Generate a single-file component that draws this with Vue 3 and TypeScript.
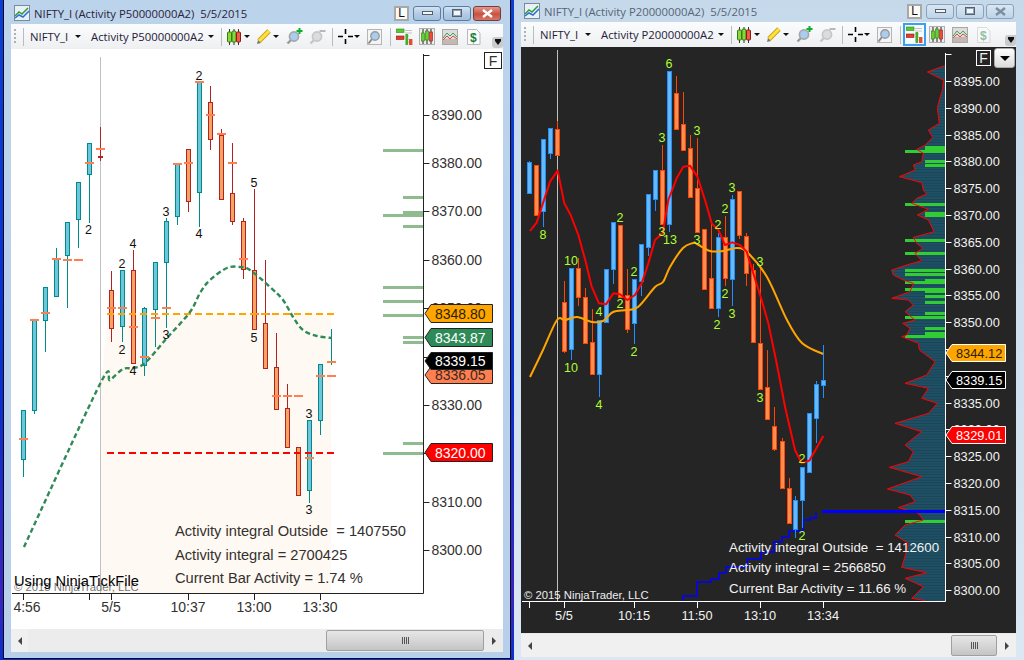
<script setup lang="ts">
type Point = [number, number]
// x, body top, body bottom, wick top, wick bottom, tick y
type Row = [number, number, number, number?, number?, number?]

interface ChartWindow {
  id: string
  title: string
  symbol: string
  account: string
  box: [number, number, number, number]
  candles: { up: Row[]; down: Row[] }
  marks: [string, number, number][]
  curves: { cls: string; points: Point[]; smooth?: boolean }[]
  axis: { x: number; top: number; bottom: number; left: number }
  prices: { text: string; y: number; tickOnly?: boolean }[]
  times: { text: string; x: number }[]
  extraTicks: number[]
  flags: { text: string; y: number; h: number; cls: string }[]
  flagX: [number, number, number, number]
  notes: { text: string; y: number }[]
  noteX: number
  copyrightY: number
  separatorX: number
  tickLen: number
}

const zoomPts = (ox: number, oy: number, pts: number[][]): Point[] =>
  pts.map(([x, y]) => [ox + x / 3, oy + y / 3] as Point)

const pointsAttr = (pts: Point[]) => pts.map(p => p.join(',')).join(' ')

// catmull-rom through the points, so the averages don't look like polylines
const curvePath = (pts: Point[], smooth?: boolean) => {
  let d = `M${pts[0][0]} ${pts[0][1]}`
  for (let i = 1; i < pts.length; i++) {
    const [x, y] = pts[i]
    if (!smooth) {
      d += ` L${x} ${y}`
      continue
    }
    const p0 = pts[Math.max(i - 2, 0)]
    const p1 = pts[i - 1]
    const p3 = pts[Math.min(i + 1, pts.length - 1)]
    const c1x = (p1[0] + (x - p0[0]) / 6).toFixed(1)
    const c1y = (p1[1] + (y - p0[1]) / 6).toFixed(1)
    const c2x = (x - (p3[0] - p1[0]) / 6).toFixed(1)
    const c2y = (y - (p3[1] - p1[1]) / 6).toFixed(1)
    d += ` C${c1x} ${c1y} ${c2x} ${c2y} ${x} ${y}`
  }
  return d
}

const flagPath = (w: ChartWindow, y: number, h: number) => {
  const [tip, notch, right] = w.flagX
  return `M${tip} ${y + h / 2} L${notch} ${y} H${right} V${y + h} H${notch} Z`
}

// labels that sit fully behind a price flag keep only their tick
const priceRange = (from: number, to: number, step: number, y0: number, scale: number, hidden: number[]) => {
  const out: { text: string; y: number; tickOnly?: boolean }[] = []
  for (let p = from; p >= to; p -= step) {
    out.push({ text: `${p}.00`, y: y0 + (from - p) * scale, tickOnly: hidden.includes(p) })
  }
  return out
}

const leftWindow: ChartWindow = {
  id: 'light',
  title: 'NIFTY_I (Activity P50000000A2)  5/5/2015',
  symbol: 'NIFTY_I',
  account: 'Activity P50000000A2',
  box: [11, 49, 492, 580],
  candles: {
    up: [
      [23.5, 410, 459, 410, 477, 439],
      [34.5, 320, 410, 320, 414, 320],
      [45.5, 287, 320, 287, 352, 313],
      [56.5, 259, 296, 248, 296, 259],
      [67.5, 222, 255, 222, 308, 260],
      [78.5, 182, 219, 182, 248, 260],
      [89.5, 143, 174, 143, 223, 163],
      [122.5, 270, 326, 270, 342, 308],
      [144.5, 308, 365, 307, 376, 357],
      [155.5, 262, 309, 262, 347, 318],
      [166.5, 221, 262, 218, 328, 308],
      [177.5, 164, 216, 164, 225, 164],
      [199.5, 82, 192, 82, 227, 82],
      [309.5, 420, 490, 420, 503, 458],
      [320.5, 364, 420, 364, 435, 376],
      [331.5, 361, 362, 329, 365, 362]
    ],
    down: [
      [100.5, 156, 157, 127, 161, 149],
      [111.5, 290, 328, 271, 342, 308],
      [133.5, 270, 363, 250, 363, 327],
      [188.5, 149, 201, 149, 212, 163],
      [210.5, 102, 139, 86, 150, 115],
      [221.5, 135, 199, 129, 199, 134],
      [232.5, 193, 221, 143, 225, 163],
      [243.5, 221, 269, 218, 279, 259],
      [254.5, 270, 329, 189, 329, 314],
      [265.5, 323, 368, 260, 368, 314],
      [276.5, 367, 409, 333, 409, 396],
      [287.5, 408, 447, 384, 447, 396],
      [298.5, 447, 495, 447, 495, 396]
    ]
  },
  marks: [
    ['2', 88.5, 234], ['2', 122, 268], ['2', 122, 354], ['4', 133, 248], ['4', 133, 375],
    ['3', 166, 216], ['3', 166, 339], ['2', 199, 80], ['4', 199, 238], ['5', 254, 187],
    ['5', 254, 342], ['3', 309, 418], ['3', 309, 514]
  ],
  curves: [
    {
      cls: 'curve-green',
      smooth: true,
      points: [
        [24, 547], [100, 384], [110, 380], [123, 369], [133, 368], [145, 363], [167, 338],
        [190, 312], [200, 293], [210, 280], [227, 268], [240, 267], [250, 270], [270, 287],
        [283, 300], [293, 317], [303, 330], [317, 336], [332, 338]
      ]
    }
  ],
  axis: { x: 423.5, top: 54, bottom: 593.5, left: 12 },
  prices: priceRange(8390, 8300, 10, 114.5, 4.84, [8340]),
  times: [
    { text: '4:56', x: 27 },
    { text: '5/5', x: 111 },
    { text: '10:37', x: 188 },
    { text: '13:00', x: 254 },
    { text: '13:30', x: 320 }
  ],
  extraTicks: [23.5, 89.5, 111.5, 188.5, 254.5, 320.5],
  flags: [
    { text: '8348.80', y: 304.5, h: 18, cls: 'flag-orange' },
    { text: '8343.87', y: 328.5, h: 18, cls: 'flag-green' },
    { text: '8336.05', y: 366.5, h: 17, cls: 'flag-coral' },
    { text: '8339.15', y: 352.5, h: 17, cls: 'flag-black' },
    { text: '8320.00', y: 443.5, h: 18, cls: 'flag-red' }
  ],
  flagX: [425, 431, 492.5, 435],
  notes: [
    { text: 'Activity integral Outside  = 1407550', y: 536 },
    { text: 'Activity integral = 2700425', y: 560 },
    { text: 'Current Bar Activity = 1.74 %', y: 583 }
  ],
  noteX: 175,
  copyrightY: 591,
  separatorX: 100.5,
  tickLen: 6
}

const rightWindow: ChartWindow = {
  id: 'dark',
  title: 'NIFTY_I (Activity P20000000A2)  5/5/2015',
  symbol: 'NIFTY_I',
  account: 'Activity P20000000A2',
  box: [521, 47, 495, 586],
  candles: {
    up: [
      [529.5, 162, 193, 161, 193],
      [543.5, 139, 211, 139, 227],
      [550.5, 128, 153, 128, 159],
      [571.5, 268, 349, 268, 360],
      [599.5, 320, 374, 320, 397],
      [606.5, 269, 322],
      [613.5, 222, 269, 222, 284],
      [634.5, 279, 323, 279, 344],
      [641.5, 244, 281, 244, 296],
      [648.5, 194, 247, 194, 256],
      [655.5, 170, 199, 170, 211],
      [669.5, 71, 224, 71, 232],
      [718.5, 237, 308, 233, 317],
      [732.5, 199, 279, 195, 306],
      [795.5, 500, 529, 496, 538],
      [802.5, 467, 500, 467, 528],
      [809.5, 413, 472],
      [816.5, 384, 418, 381, 443],
      [823.5, 380, 385, 345, 398]
    ],
    down: [
      [536.5, 165, 215],
      [557.5, 129, 155, 121, 155],
      [564.5, 302, 351, 281, 353],
      [578.5, 268, 297, 258, 306],
      [585.5, 297, 343, 288, 343],
      [592.5, 342, 374, 309, 374],
      [620.5, 225, 297],
      [627.5, 295, 329, 269, 333],
      [662.5, 170, 224, 145, 224],
      [676.5, 93, 129, 76, 129],
      [683.5, 124, 150, 92, 151],
      [690.5, 148, 197, 135, 197],
      [697.5, 188, 232, 138, 232],
      [704.5, 229, 289],
      [711.5, 278, 308, 223, 308],
      [725.5, 237, 278, 216, 286],
      [739.5, 191, 235, 191, 239],
      [746.5, 236, 273, 233, 286],
      [753.5, 270, 342, 264, 342],
      [760.5, 343, 389, 268, 389],
      [767.5, 387, 419, 350, 419],
      [774.5, 426, 449, 407, 451],
      [782.5, 441, 488, 438, 488],
      [789.5, 488, 523, 478, 523]
    ]
  },
  marks: [
    ['8', 543, 239], ['10', 571, 265], ['10', 571, 372], ['4', 599, 316], ['4', 599, 409],
    ['2', 620, 222], ['2', 620, 308], ['2', 634, 276], ['2', 634, 356], ['3', 662, 142],
    ['3', 662, 236], ['13', 670, 244], ['6', 669, 68], ['3', 697, 135], ['3', 697, 244],
    ['2', 718, 229], ['2', 717, 329], ['2', 725, 213], ['2', 725, 298], ['3', 732, 192],
    ['3', 732, 318], ['3', 760, 266], ['3', 760, 402], ['2', 802, 463], ['2', 802, 540]
  ],
  curves: [
    {
      cls: 'curve-orange',
      smooth: true,
      points: [
        [530, 377], [543, 350], [557, 320], [565, 320], [577, 317], [592, 322], [603, 321],
        [613, 312], [627, 310], [638, 307], [655, 287], [663, 282], [670, 267], [683, 248],
        [693, 243], [697, 244], [710, 251], [723, 251], [737, 248], [748, 253],
        [767, 277], [787, 320], [802, 343], [823, 354]
      ]
    },
    {
      cls: 'curve-red',
      points: [
        ...zoomPts(520, 60, [
          [30, 513], [50, 488], [90, 365], [113, 332], [133, 430], [152, 465], [175, 525],
          [197, 605], [215, 680], [237, 730], [258, 733], [280, 700], [300, 703], [322, 720],
          [345, 705], [365, 670], [385, 610], [405, 540], [428, 520], [445, 420], [470, 355],
          [490, 320], [510, 317], [532, 350]
        ]),
        ...zoomPts(690, 60, [
          [45, 420], [65, 490], [85, 510], [105, 555], [127, 547], [150, 555], [170, 575],
          [190, 640], [215, 720], [235, 790], [258, 900]
        ]),
        ...zoomPts(520, 350, [[795, 170], [825, 300], [845, 340], [868, 332], [910, 258]])
      ]
    }
  ],
  axis: { x: 945.5, top: 53, bottom: 601.5, left: 522 },
  prices: priceRange(8395, 8300, 5, 81, 5.36, [8345, 8340]),
  times: [
    { text: '5/5', x: 564 },
    { text: '10:15', x: 634 },
    { text: '11:50', x: 697 },
    { text: '13:10', x: 760 },
    { text: '13:34', x: 823 }
  ],
  extraTicks: [529.5, 564.5, 634.5, 697.5, 760.5, 823.5],
  flags: [
    { text: '8344.12', y: 344.5, h: 17, cls: 'flag-orange' },
    { text: '8339.15', y: 371.5, h: 17, cls: 'flag-black-white' },
    { text: '8329.01', y: 426.5, h: 17, cls: 'flag-red-white' }
  ],
  flagX: [946, 952, 1005.5, 956],
  notes: [
    { text: 'Activity integral Outside  = 1412600', y: 552 },
    { text: 'Activity integral = 2566850', y: 572 },
    { text: 'Current Bar Activity = 11.66 %', y: 593 }
  ],
  noteX: 729,
  copyrightY: 599,
  separatorX: 557.5,
  tickLen: 6
}

const windows = [leftWindow, rightWindow]

// volume lines on the left chart: y, start x, height
const volumeBars: [number, number, number][] = [
  [149, 383, 3], [196, 403, 3], [211, 403, 5], [214, 383, 3], [225, 403, 3], [286, 383, 3],
  [300, 383, 3], [314, 383, 3], [336, 403, 3], [341, 403, 3], [442, 403, 3], [452, 383, 3]
]

// volume profile of the dark chart
const profileLine: Point[] = [
  ...zoomPts(860, 50, [
    [254, 47], [202, 66], [250, 90], [248, 118], [238, 150], [232, 175], [238, 220], [205, 240],
    [218, 262], [196, 285], [170, 298], [190, 310], [185, 335], [160, 345], [165, 360], [118, 380],
    [185, 398], [190, 420], [200, 432], [170, 445], [155, 460], [205, 478], [172, 495], [205, 510],
    [222, 545], [160, 562], [170, 580], [188, 595], [165, 610], [185, 632], [140, 645], [95, 660],
    [100, 675], [130, 690], [160, 700], [150, 725], [95, 745], [145, 750], [160, 765], [135, 785],
    [165, 810], [128, 820], [150, 835], [140, 855], [125, 860], [175, 880], [178, 900]
  ]),
  ...zoomPts(520, 350, [
    [1245, 35], [1220, 75], [1155, 100], [1225, 115], [1205, 145], [1252, 160], [1225, 190],
    [1125, 220], [1205, 245], [1155, 285], [1180, 305], [1165, 335], [1108, 352], [1205, 380],
    [1102, 417], [1170, 435], [1185, 455], [1135, 473], [1195, 490], [1210, 510], [1155, 525],
    [1125, 555], [1165, 580], [1155, 620], [1145, 652], [1220, 668], [1155, 685], [1210, 710],
    [1175, 745], [1215, 752]
  ])
]
const profileArea: Point[] = [[945, 66], ...profileLine, [945, 601]]

const profileBars: [number, number, number][] = [
  [146, 925, 4], [150, 905, 3], [160, 925, 3], [164, 925, 3], [203, 905, 3], [212, 925, 5],
  [239, 905, 3], [252, 905, 3], [269, 905, 3], [269, 925, 3], [273, 905, 3], [279, 925, 5],
  [281, 905, 3], [288, 905, 3], [288, 925, 5], [295, 925, 3], [301, 925, 3], [312, 925, 3],
  [316, 905, 3], [327, 925, 3], [332, 925, 4], [335, 905, 3], [520, 905, 3]
]
</script>

<template>
  <div class="desktop">
    <section v-for="w in windows" :key="w.id" class="window" :class="`window-${w.id}`">
      <header class="titlebar">
        <svg class="app-icon" width="16" height="16" viewBox="0 0 16 16">
          <rect x="0.5" y="0.5" width="15" height="15" fill="#e8f0f8" stroke="#7a8a9a" />
          <path d="M1 11 L5 7 L8 9 L14 3" fill="none" stroke="#2f9c3a" stroke-width="1.5" />
          <path d="M1 13 L5 10 L9 12 L15 6" fill="none" stroke="#2f6fd0" stroke-width="1.5" />
        </svg>
        <span class="title-text">{{ w.title }}</span>
        <span class="link-btn">L</span>
        <span class="win-btn"><i class="glyph-min" /></span>
        <span class="win-btn"><i class="glyph-max" /></span>
        <span class="win-btn win-close">
          <svg width="13" height="9" viewBox="0 0 13 9">
            <path d="M2 1 L11 8 M11 1 L2 8" stroke="currentColor" stroke-width="2.4" />
          </svg>
        </span>
      </header>

      <div class="toolbar">
        <i class="grip" />
        <i class="sep ml7" />
        <span class="tb-text sym">{{ w.symbol }}</span>
        <i class="caret ml5" />
        <span class="tb-text acct">{{ w.account }}</span>
        <i class="caret ml5" />
        <i class="sep ml7" />
        <svg class="ml5" width="14" height="16" viewBox="0 0 14 16">
          <path d="M2.5 0V16M7 0V16M11.5 0V16" stroke="#333" />
          <rect x="0.5" y="3" width="4" height="10" rx="1" fill="#86d93a" stroke="#3b7a16" />
          <rect x="5" y="2" width="4" height="11" rx="1" fill="#86d93a" stroke="#3b7a16" />
          <rect x="9.5" y="3" width="4" height="10" rx="1" fill="#ef5a4a" stroke="#8a1c12" />
        </svg>
        <i class="caret ml3" />
        <svg class="ml6" width="16" height="16" viewBox="0 0 16 16">
          <path d="M3 12 L13 2" stroke="#c9a21a" stroke-width="5" />
          <path d="M3 12 L13 2" stroke="#ffe23a" stroke-width="3" />
          <path d="M1 15 L2 11 L5 14 Z" fill="#777" />
        </svg>
        <i class="caret ml1" />
        <svg class="ml7" width="17" height="17" viewBox="0 0 17 17">
          <path d="M6 11 L1.5 15.5" stroke="#9a9a9a" stroke-width="2.4" />
          <circle cx="8" cy="8.5" r="4.6" fill="#a9cdf0" stroke="#a6a6a6" stroke-width="1.6" />
          <path d="M13.5 0V6M10.5 3H16.5" stroke="#0cae2a" stroke-width="2" />
        </svg>
        <svg class="ml6" width="17" height="17" viewBox="0 0 17 17">
          <path d="M6 11 L1.5 15.5" stroke="#c6c6c6" stroke-width="2.4" />
          <circle cx="8" cy="8.5" r="4.6" fill="#dcdcdc" stroke="#c6c6c6" stroke-width="1.6" />
          <path d="M10.5 3H16.5" stroke="#b8b8b8" stroke-width="2" />
        </svg>
        <i class="sep ml6" />
        <svg class="ml5" width="15" height="15" viewBox="0 0 15 15">
          <path d="M7.5 0V5M7.5 10V15M0 7.5H5M10 7.5H15" stroke="#000" stroke-width="1.6" />
        </svg>
        <i class="caret ml1" />
        <svg class="ml7" width="15" height="16" viewBox="0 0 15 16">
          <rect x="0.5" y="0.5" width="14" height="15" fill="#f4f4f4" stroke="#b5b5b5" />
          <path d="M5 10 L1.5 14.5" stroke="#8a8a8a" stroke-width="2" />
          <circle cx="8" cy="7" r="4.2" fill="#a9cdf0" stroke="#9a9a9a" stroke-width="1.4" />
        </svg>
        <i class="sep ml8" />
        <span class="tb-icon ml5" :class="{ selected: w.id === 'dark' }">
          <svg width="17" height="17" viewBox="0 0 17 17">
            <path d="M9 2.5H16M9 5H16M9 8H13M9 11H13M9 14H13" stroke="#c4c4c4" />
            <rect x="0" y="1" width="8" height="3.5" fill="#56c930" stroke="#2f8a15" stroke-width="0.6" />
            <rect x="0" y="8" width="8" height="3.5" fill="#e23c30" stroke="#8a1c12" stroke-width="0.6" />
            <rect x="9.5" y="6" width="2.6" height="11" fill="#3fb02a" />
            <rect x="13" y="11" width="3.4" height="6" fill="#e84a30" />
          </svg>
        </span>
        <svg class="ml6" width="16" height="17" viewBox="0 0 16 17">
          <rect x="0.5" y="0.5" width="15" height="16" fill="#ededed" stroke="#b0b0b0" />
          <path d="M4 1V16M8 1V16M12 1V16" stroke="#222" />
          <rect x="2.5" y="5" width="3" height="8" fill="#63d12f" stroke="#2f7a15" stroke-width="0.6" />
          <rect x="6.5" y="3" width="3" height="9" fill="#63d12f" stroke="#2f7a15" stroke-width="0.6" />
          <rect x="10.5" y="4" width="3" height="9" fill="#ef4a3a" stroke="#8a1c12" stroke-width="0.6" />
        </svg>
        <svg class="ml7" width="16" height="16" viewBox="0 0 16 16">
          <rect x="0.5" y="0.5" width="15" height="15" fill="#dcdcdc" stroke="#a8a8a8" />
          <rect x="1" y="10" width="14" height="5" fill="#c4b8b0" />
          <path d="M1 9 L5 4 L8 7 L11 4 L15 8" fill="none" stroke="#3aa84a" />
          <path d="M1 11 L5 7 L8 10 L11 7 L15 10" fill="none" stroke="#e04a4a" />
        </svg>
        <svg class="ml8" :class="{ muted: w.id === 'dark' }" width="15" height="16" viewBox="0 0 15 16">
          <path d="M1.5 0.5H10.5L14 4V15.5H1.5Z" fill="#fbfbfb" stroke="#b8b8b8" />
          <text x="4" y="13" class="dollar">$</text>
        </svg>
        <span class="chevron"><i /></span>
      </div>

      <div class="chart">
        <svg
          class="plot"
          :width="w.box[2]"
          :height="w.box[3]"
          :viewBox="w.box.join(' ')"
        >
          <defs v-if="w.id === 'dark'">
            <pattern id="stripes" width="3" height="2.7" patternUnits="userSpaceOnUse">
              <rect width="3" height="2.7" fill="#1f5166" />
              <rect y="1.9" width="3" height="0.8" fill="#1a4153" />
            </pattern>
          </defs>

          <template v-if="w.id === 'light'">
            <polygon class="session" points="108,314 331,314 331,593 101,593 101,384" />
            <rect
              v-for="(b, i) in volumeBars"
              :key="i"
              class="volume"
              :x="b[1]"
              :y="b[0]"
              :width="423 - b[1]"
              :height="b[2]"
            />
          </template>
          <template v-else>
            <polygon class="profile" :points="pointsAttr(profileArea)" />
            <rect
              v-for="(b, i) in profileBars"
              :key="i"
              class="profile-bar"
              :x="b[1]"
              :y="b[0]"
              :width="945 - b[1]"
              :height="b[2]"
            />
            <polyline class="profile-line" :points="pointsAttr(profileLine)" />
            <rect class="level-blue" x="822" y="510" width="123" height="3" />
            <path
              class="stairs"
              d="M683 601V596H697V582H711V579H719V573H726V567H747V559H761V552H774V542H782V537H789V531H803V520H810V518H816V512"
            />
          </template>

          <line
            class="separator"
            :x1="w.separatorX"
            :x2="w.separatorX"
            :y1="w.id === 'light' ? 57 : 50"
            :y2="w.axis.bottom"
          />

          <g class="wicks up">
            <line
              v-for="c in w.candles.up"
              :key="c[0]"
              :x1="c[0]"
              :x2="c[0]"
              :y1="c[3] ?? c[1]"
              :y2="c[4] ?? c[2]"
            />
          </g>
          <g class="wicks down">
            <line
              v-for="c in w.candles.down"
              :key="c[0]"
              :x1="c[0]"
              :x2="c[0]"
              :y1="c[3] ?? c[1]"
              :y2="c[4] ?? c[2]"
            />
          </g>
          <g class="bodies up">
            <rect
              v-for="c in w.candles.up"
              :key="c[0]"
              :x="c[0] - 2"
              :y="c[1] + 0.5"
              width="4"
              :height="c[2] - c[1]"
            />
          </g>
          <g class="bodies down">
            <rect
              v-for="c in w.candles.down"
              :key="c[0]"
              :x="c[0] - 2"
              :y="c[1] + 0.5"
              width="4"
              :height="c[2] - c[1]"
            />
          </g>
          <g v-if="w.id === 'light'" class="candle-ticks">
            <template v-for="c in [...w.candles.up, ...w.candles.down]" :key="c[0]">
              <rect v-if="c[5]" :x="c[0] - 4.5" :y="c[5] - 1" width="9" height="2" />
            </template>
            <rect x="327" y="375" width="9" height="2" />
          </g>

          <template v-if="w.id === 'light'">
            <line class="dash dash-orange" x1="107" x2="337" y1="314" y2="314" />
            <line class="dash dash-red" x1="107" x2="337" y1="453" y2="453" />
          </template>

          <path
            v-for="c in w.curves"
            :key="c.cls"
            :class="c.cls"
            :d="curvePath(c.points, c.smooth)"
          />

          <text v-for="(m, i) in w.marks" :key="i" class="mark" :x="m[1]" :y="m[2]">{{ m[0] }}</text>

          <g class="axis">
            <line :x1="w.axis.x" :x2="w.axis.x" :y1="w.axis.top" :y2="w.axis.bottom" />
            <line :x1="w.axis.left" :x2="w.axis.x" :y1="w.axis.bottom" :y2="w.axis.bottom" />
            <line
              :x1="w.axis.x"
              :x2="w.axis.x + w.tickLen"
              :y1="w.axis.top + 1.5"
              :y2="w.axis.top + 1.5"
            />
            <line
              v-for="p in w.prices"
              :key="p.text"
              :x1="w.axis.x"
              :x2="w.axis.x + w.tickLen"
              :y1="Math.round(p.y) + 0.5"
              :y2="Math.round(p.y) + 0.5"
            />
            <line
              v-for="t in w.extraTicks"
              :key="t"
              :x1="t"
              :x2="t"
              :y1="w.axis.bottom"
              :y2="w.axis.bottom + 6.5"
            />
          </g>

          <template v-for="p in w.prices" :key="p.text">
            <text v-if="!p.tickOnly" class="price" :x="w.axis.x + 8" :y="p.y + 5">{{ p.text }}</text>
          </template>
          <text
            v-for="t in w.times"
            :key="t.text"
            class="time"
            :x="t.x"
            :y="w.id === 'light' ? 612 : 620"
          >{{ t.text }}</text>

          <g v-for="f in w.flags" :key="f.text" :class="f.cls">
            <path class="flag-shape" :d="flagPath(w, f.y, f.h)" />
            <text class="flag-text" :x="w.flagX[3]" :y="f.y + f.h / 2 + 5">{{ f.text }}</text>
          </g>

          <text
            v-for="n in w.notes"
            :key="n.text"
            class="note"
            :x="w.noteX"
            :y="n.y"
          >{{ n.text }}</text>

          <text class="copyright" :x="w.id === 'light' ? 14 : 524" :y="w.copyrightY">© 2015 NinjaTrader, LLC</text>
          <text v-if="w.id === 'light'" class="using" x="14" y="586">Using NinjaTickFile</text>
        </svg>

        <span class="f-box">F</span>
        <span v-if="w.id === 'dark'" class="drop-btn"><i /></span>
      </div>

      <div class="scrollbar">
        <span class="scroll-end start"><i class="arrow-left" /></span>
        <span class="scroll-track">
          <span class="thumb"><i /></span>
        </span>
        <span class="scroll-end stop"><i class="arrow-right" /></span>
      </div>
    </section>
  </div>
</template>

<style scoped>
.desktop {
  display: flex;
  width: 1024px;
  height: 660px;
  overflow: hidden;
  padding-left: 3px;
  box-sizing: border-box;
  background: linear-gradient(#0b3fd6, #0a2fd0 60%, #3a24c0 90%, #0a2fd0);
}

.window {
  display: flex;
  flex-direction: column;
  box-sizing: border-box;
  padding: 0 7px;
}

.window-light {
  width: 508px;
  height: 659px;
  border: 1px solid #0a0a14;
  border-top: 0;
  background: linear-gradient(#bcd3ec, #b7cfe9);
}

.window-dark {
  width: 510px;
  height: 660px;
  margin-left: 3px;
  padding: 0 8px 0 7px;
  background: linear-gradient(#c6d9ea, #dbe7f3);
}

/* Title bar */
.titlebar {
  display: flex;
  align-items: center;
  font-family: "Open Sans", "Noto Sans", sans-serif;
  font-size: 11.3px;
}

.window-light .titlebar {
  height: 24px;
  color: #2a2438;
  padding-top: 2px;
  box-sizing: border-box;
}

.window-dark .titlebar {
  height: 22px;
  color: #566577;
}

.app-icon {
  margin: 0 4px 0 3px;
}

.title-text {
  flex: 1;
  white-space: pre;
}

.link-btn {
  display: flex;
  align-items: center;
  justify-content: center;
  width: 15px;
  height: 15px;
  margin-right: 4px;
  font: 12px "Liberation Sans", sans-serif;
  color: #111;
  background: #fbfbf6;
  border: 2px solid #a8a8a8;
  box-sizing: border-box;
}

.win-btn {
  display: flex;
  align-items: center;
  justify-content: center;
  width: 28px;
  height: 15px;
  margin-right: 2px;
  box-sizing: border-box;
  color: #fff;
  border: 1px solid #5e7c9c;
  border-radius: 3px;
  background: linear-gradient(#d4e4f3, #b4cde6 50%, #a4c0de);
}

.win-close {
  margin-right: 2px;
  border-color: #7a3a3a;
  background: linear-gradient(#e09a90, #c9503f 55%, #d4786a);
}

.window-dark .win-btn,
.window-dark .win-close {
  margin-right: 2px;
  color: #f4f8fc;
  border-color: #8aa2bc;
  background: linear-gradient(#d9e6f2, #c0d4e8);
}

.window-dark .win-close svg path {
  stroke: #7a8ea4;
}

.glyph-min {
  width: 11px;
  height: 4px;
  border: 1px solid #56606c;
  background: #f4f6f8;
  box-sizing: border-box;
}

.glyph-max {
  width: 10px;
  height: 8px;
  border: 1px solid #56606c;
  background: #f4f6f8;
  box-shadow: inset 0 0 0 1px #8ea4bc;
  box-sizing: border-box;
}

/* Toolbar */
.toolbar {
  display: flex;
  align-items: center;
  height: 25px;
  padding-left: 3px;
  position: relative;
  flex: none;
  background: linear-gradient(#fbfcfd, #eeeff1);
}

.grip {
  width: 2px;
  height: 16px;
  background: repeating-linear-gradient(#b0b0b0 0 2px, transparent 2px 4px);
}

.sep {
  width: 1px;
  height: 18px;
  background: #b8bcc2;
}

.tb-text {
  font-family: "Open Sans", "Noto Sans", sans-serif;
  font-size: 11.3px;
  color: #242038;
  white-space: nowrap;
}

.sym {
  width: 40px;
  margin-left: 6px;
}

.acct {
  width: 112px;
  margin-left: 10px;
}

.caret {
  width: 0;
  height: 0;
  border: 3px solid transparent;
  border-top: 3px solid #111;
  border-bottom: 0;
}

.ml1 { margin-left: 1px; }
.ml3 { margin-left: 3px; }
.ml5 { margin-left: 5px; }
.ml6 { margin-left: 6px; }
.ml7 { margin-left: 7px; }
.ml8 { margin-left: 8px; }

.tb-icon {
  display: flex;
}

.tb-icon.selected {
  outline: 2px solid #3aa0f0;
  outline-offset: 1px;
  background: #f6fbff;
}

.muted {
  opacity: 0.45;
}

.dollar {
  font: bold 12px "Liberation Sans", sans-serif;
  fill: #15803a;
}

.chevron {
  position: absolute;
  right: 0;
  bottom: 1px;
  display: flex;
  align-items: center;
  justify-content: center;
  width: 11px;
  height: 11px;
  border-radius: 3px 0 3px 3px;
  background: #c9cbce;
}

.chevron i {
  width: 0;
  height: 0;
  border: 3px solid transparent;
  border-top: 4px solid #111;
  border-bottom: 0;
  box-shadow: 0 -2px 0 #111;
}

/* Chart */
.chart {
  position: relative;
  flex: 1;
  min-height: 0;
}

.window-light .chart {
  background: #fff;
}

.window-dark .chart {
  background: #252525;
}

.plot {
  display: block;
}

.session {
  fill: #fff9f3;
}

.volume {
  fill: #8fbc8f;
}

.profile {
  fill: url(#stripes);
}

.profile-bar {
  fill: #32cd32;
}

.profile-line {
  fill: none;
  stroke: #ff0000;
  stroke-width: 1;
}

.level-blue {
  fill: #0000ff;
}

.stairs {
  fill: none;
  stroke: #0000ff;
  stroke-width: 1.5;
}

.separator {
  stroke: #c0c0c0;
  stroke-width: 1;
}

.wicks line {
  stroke-width: 1;
}

.bodies rect {
  stroke-width: 1;
}

.window-light .wicks.up line,
.window-light .bodies.up rect {
  stroke: #008b8b;
}

.window-light .wicks.down line,
.window-light .bodies.down rect {
  stroke: #b22222;
}

.window-light .bodies.up rect {
  fill: #6fc5dc;
}

.window-light .bodies.down rect {
  fill: #f4a460;
}

.window-dark .wicks.up line,
.window-dark .bodies.up rect {
  stroke: #1e90ff;
}

.window-dark .wicks.down line,
.window-dark .bodies.down rect {
  stroke: #ff4500;
}

.window-dark .bodies.up rect {
  fill: #66b8f8;
}

.window-dark .bodies.down rect {
  fill: #ff8c50;
}

.candle-ticks rect {
  fill: #ff7f50;
}

.dash {
  stroke-width: 2;
  stroke-dasharray: 7 4;
}

.dash-orange {
  stroke: #ffa500;
}

.dash-red {
  stroke: #ff0000;
}

.curve-green,
.curve-orange,
.curve-red {
  fill: none;
  stroke-width: 2;
  stroke-linejoin: round;
}

.curve-green {
  stroke: #2e8b57;
  stroke-width: 2.4;
  stroke-dasharray: 5 3;
}

.curve-orange {
  stroke: #ffa500;
}

.curve-red {
  stroke: #ff0000;
}

.mark,
.price,
.time,
.note,
.copyright,
.using,
.flag-text {
  font-family: "Liberation Sans", Arial, sans-serif;
  white-space: pre;
}

.mark {
  font-size: 12.5px;
  text-anchor: middle;
}

.window-light .mark {
  fill: #111;
}

.window-dark .mark {
  fill: #adff2f;
}

.axis line {
  stroke-width: 1;
}

.window-light .axis line {
  stroke: #222;
}

.window-dark .axis line {
  stroke: #fff;
}

.time {
  text-anchor: middle;
}

.window-light .price,
.window-light .time {
  font-size: 14px;
  fill: #33312f;
}

.window-light .note {
  font-size: 14.67px;
  fill: #33312f;
}

.window-dark .price,
.window-dark .time {
  font-size: 12.8px;
  fill: #f2f2f2;
}

.window-dark .note {
  font-size: 13.33px;
  fill: #f2f2f2;
}

.window-light .copyright {
  font-size: 11.3px;
  fill: #777;
}

.window-dark .copyright {
  font-size: 11.3px;
  fill: #eee;
}

.using {
  font-size: 14.67px;
  fill: #000;
}

.flag-shape {
  stroke: #222;
  stroke-width: 1;
}

.window-light .flag-text {
  font-size: 14px;
}

.window-dark .flag-text {
  font-size: 12.8px;
}

.flag-orange .flag-shape {
  fill: #ffa500;
}

.flag-orange .flag-text {
  fill: #2a1f00;
}

.flag-green .flag-shape {
  fill: #2e8b57;
}

.flag-green .flag-text {
  fill: #fff;
}

.flag-coral .flag-shape {
  fill: #ff7f50;
}

.flag-coral .flag-text {
  fill: #3a2a20;
}

.flag-black .flag-shape {
  fill: #000;
}

.flag-black .flag-text,
.flag-red .flag-text,
.flag-black-white .flag-text,
.flag-red-white .flag-text {
  fill: #fff;
}

.flag-red .flag-shape {
  fill: #ff0000;
}

.flag-black-white .flag-shape {
  fill: #000;
  stroke: #fff;
}

.flag-red-white .flag-shape {
  fill: #ff0000;
  stroke: #fff;
}

.window-dark .flag-orange .flag-shape {
  stroke: #fff;
}

.f-box {
  position: absolute;
  display: flex;
  align-items: center;
  justify-content: center;
  box-sizing: border-box;
  font: 14px "Liberation Sans", sans-serif;
}

.window-light .f-box {
  top: 3px;
  right: 1px;
  width: 18px;
  height: 17px;
  color: #333;
  border: 1px solid #222;
  background: #fff;
}

.window-dark .f-box {
  top: 3px;
  right: 25px;
  width: 15px;
  height: 16px;
  color: #eee;
  border: 1px solid #fff;
}

.drop-btn {
  position: absolute;
  top: 1px;
  right: 1px;
  display: flex;
  align-items: center;
  justify-content: center;
  width: 21px;
  height: 20px;
  box-sizing: border-box;
  border: 1px solid #aaa;
  border-radius: 3px;
  background: linear-gradient(#fdfdfd, #dcdcdc);
}

.drop-btn i {
  width: 0;
  height: 0;
  border: 5px solid transparent;
  border-top: 5px solid #000;
  border-bottom: 0;
}

/* Scroll bar */
.scrollbar {
  display: flex;
  flex: none;
  background: #ececec;
}

.window-light .scrollbar {
  height: 23px;
  margin-bottom: 6px;
}

.window-dark .scrollbar {
  height: 24px;
  margin-bottom: 3px;
  background: #f0f0f0;
  border-top: 1px solid #e8e8e8;
  box-sizing: border-box;
}

.scroll-end {
  display: flex;
  align-items: center;
  justify-content: center;
  flex: none;
}

.scroll-end.start {
  width: 17px;
  background: #f0f0f0;
}

.scroll-end.stop {
  width: 19px;
}

.arrow-left,
.arrow-right {
  width: 0;
  height: 0;
  border: 4px solid transparent;
}

.arrow-left {
  border-right: 4px solid #444;
  border-left: 0;
}

.arrow-right {
  border-left: 4px solid #444;
  border-right: 0;
}

.scroll-track {
  flex: 1;
  display: flex;
  justify-content: flex-end;
  align-items: center;
}

.thumb {
  display: flex;
  align-items: center;
  justify-content: center;
  box-sizing: border-box;
  height: 21px;
  border: 1px solid #a0a0a0;
  border-radius: 2px;
  background: linear-gradient(#e6e6e6, #d6d6d6 50%, #c4c4c4);
}

.window-light .thumb {
  width: 158px;
}

.window-dark .thumb {
  width: 46px;
}

.thumb i {
  width: 7px;
  height: 7px;
  background: repeating-linear-gradient(90deg, #555 0 1px, transparent 1px 2px);
}
</style>
